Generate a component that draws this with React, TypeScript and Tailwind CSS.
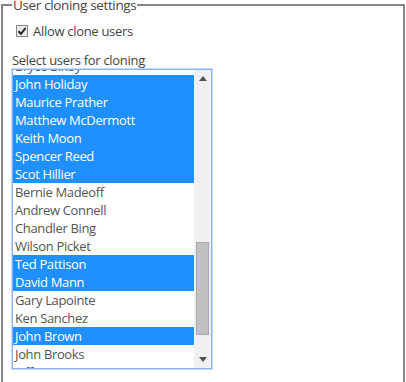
import React from 'react';

type User = { name: string; selected: boolean };

const users: User[] = [
  { name: 'Bryce Bixby', selected: false },
  { name: 'John Holiday', selected: true },
  { name: 'Maurice Prather', selected: true },
  { name: 'Matthew McDermott', selected: true },
  { name: 'Keith Moon', selected: true },
  { name: 'Spencer Reed', selected: true },
  { name: 'Scot Hillier', selected: true },
  { name: 'Bernie Madeoff', selected: false },
  { name: 'Andrew Connell', selected: false },
  { name: 'Chandler Bing', selected: false },
  { name: 'Wilson Picket', selected: false },
  { name: 'Ted Pattison', selected: true },
  { name: 'David Mann', selected: true },
  { name: 'Gary Lapointe', selected: false },
  { name: 'Ken Sanchez', selected: false },
  { name: 'John Brown', selected: true },
  { name: 'John Brooks', selected: false },
  { name: 'Jeff Teper', selected: false },
];

const font = { fontFamily: '"Open Sans", "Noto Sans", sans-serif' };

function Checkbox() {
  return (
    <span className="w-[12px] h-[12px] border border-[#8a8a8a] bg-[#e9e9e9] flex items-center justify-center shrink-0">
      <svg width="10" height="10" viewBox="0 0 10 10">
        <path d="M1.5 5.2 L4 7.8 L8.6 2" fill="none" stroke="#222" strokeWidth="2" />
      </svg>
    </span>
  );
}

function Scrollbar() {
  return (
    <div className="w-[17px] bg-[#f0f0f0] flex flex-col shrink-0">
      <div className="h-[17px] flex items-center justify-center">
        <svg width="8" height="5" viewBox="0 0 8 5">
          <path d="M0 5 L4 0 L8 5 Z" fill="#505050" />
        </svg>
      </div>
      <div className="flex-1 flex flex-col items-center">
        <div className="h-[155px]" />
        <div className="w-[13px] h-[93px] bg-[#c1c1c1] border border-[#a8a8a8]" />
      </div>
      <div className="h-[17px] flex items-center justify-center">
        <svg width="8" height="5" viewBox="0 0 8 5">
          <path d="M0 0 L8 0 L4 5 Z" fill="#505050" />
        </svg>
      </div>
    </div>
  );
}

export default function App() {
  return (
    <div className="w-[406px] h-[382px] bg-white overflow-hidden tracking-[-0.3px]" style={font}>
      <fieldset className="ml-px w-[404px] h-[420px] border-2 border-[#858585] px-[9px]">
        <legend className="px-[1px] text-[13.5px] leading-[10px] text-[#444] tracking-[-0.35px]">User cloning settings</legend>

        <label className="flex items-center gap-[5px] mt-[12px] ml-[4px] text-[13px] leading-[18px] text-[#444]">
          <Checkbox />
          Allow clone users
        </label>

        <div className="mt-[11px] text-[13px] leading-[18px] text-[#444]">Select users for cloning</div>

        <div className="w-[200px] h-[300px] border border-[#8fb0ee] shadow-[0_0_0_1px_#c9daf8] flex bg-white">
          <div className="flex-1 overflow-hidden">
            <div className="-mt-[13px]">
              {users.map((u) => (
                <div
                  key={u.name}
                  className={`h-[18px] px-[2px] text-[13px] leading-[18px] tracking-[-0.35px] whitespace-nowrap ${
                    u.selected ? 'bg-[#1e90ff] text-white' : 'text-[#555]'
                  }`}
                >
                  {u.name}
                </div>
              ))}
            </div>
          </div>
          <Scrollbar />
        </div>
      </fieldset>
    </div>
  );
}
